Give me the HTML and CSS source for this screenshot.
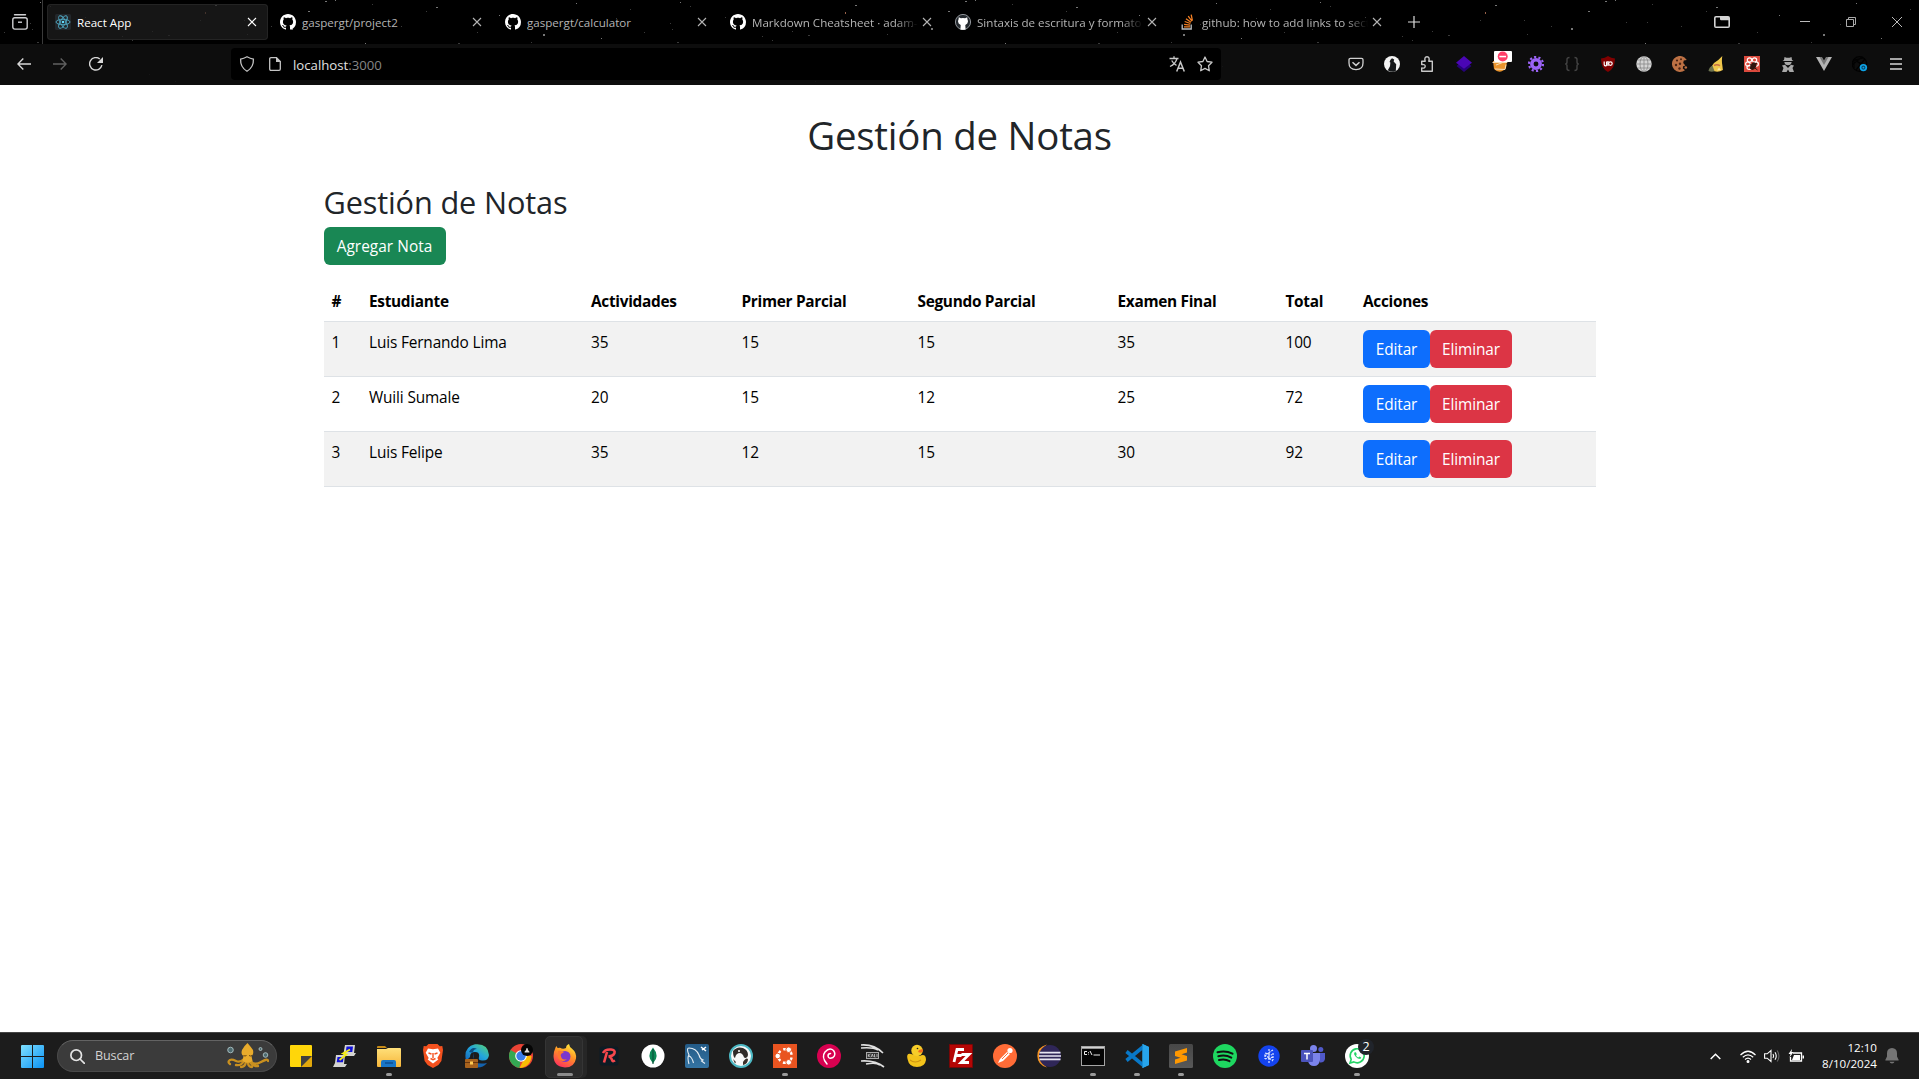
FILE: index.html
```
<!DOCTYPE html>
<html lang="es">
<head>
<meta charset="utf-8">
<title>React App</title>
<link rel="stylesheet" href="styles.css">
</head>
<body>
<svg class="defs" aria-hidden="true">
  <defs>
    <symbol id="x" viewBox="0 0 10 10"><path d="M1 1l8 8M9 1L1 9" fill="none" stroke="currentColor" stroke-width="1.1"/></symbol>
    <symbol id="github" viewBox="0 0 16 16"><path fill="currentColor" d="M8 0C3.58 0 0 3.58 0 8c0 3.54 2.29 6.53 5.47 7.59.4.07.55-.17.55-.38 0-.19-.01-.82-.01-1.49-2.01.37-2.53-.49-2.69-.94-.09-.23-.48-.94-.82-1.13-.28-.15-.68-.52-.01-.53.63-.01 1.08.58 1.23.82.72 1.21 1.87.87 2.33.66.07-.52.28-.87.51-1.07-1.78-.2-3.64-.89-3.64-3.95 0-.87.31-1.59.82-2.15-.08-.2-.36-1.02.08-2.12 0 0 .67-.21 2.2.82.64-.18 1.32-.27 2-.27s1.36.09 2 .27c1.53-1.04 2.2-.82 2.2-.82.44 1.1.16 1.92.08 2.12.51.56.82 1.27.82 2.15 0 3.07-1.87 3.75-3.65 3.95.29.25.54.73.54 1.48 0 1.07-.01 1.93-.01 2.2 0 .21.15.46.55.38A8.01 8.01 0 0016 8c0-4.42-3.58-8-8-8z"/></symbol>
    <linearGradient id="gWin" x1="0" y1="0" x2="1" y2="1"><stop stop-color="#7fe0ff"/><stop offset="1" stop-color="#0a92f5"/></linearGradient>
    <linearGradient id="gEdge" x1="0" y1="1" x2="1" y2="0"><stop stop-color="#1565b8"/><stop offset=".5" stop-color="#22a5dd"/><stop offset="1" stop-color="#5bd66d"/></linearGradient>
    <linearGradient id="gFox" x1=".8" y1="0" x2=".3" y2="1"><stop stop-color="#fff03f"/><stop offset=".45" stop-color="#ff9425"/><stop offset="1" stop-color="#ff2f5e"/></linearGradient>
    <linearGradient id="gFolder" x1="0" y1="0" x2="0" y2="1"><stop stop-color="#ffe07a"/><stop offset="1" stop-color="#f6b63a"/></linearGradient>
    <linearGradient id="gSql" x1="0" y1="0" x2="0" y2="1"><stop stop-color="#235a86"/><stop offset="1" stop-color="#3474a3"/></linearGradient>
    <linearGradient id="gSub" x1="0" y1="0" x2="0" y2="1"><stop stop-color="#474747"/><stop offset="1" stop-color="#585858"/></linearGradient>
  </defs>
</svg>

<header class="browser">
  <svg class="stars" width="1919" height="85" aria-hidden="true">
    <defs>
      <pattern id="sky" width="640" height="85" patternUnits="userSpaceOnUse">
        <g fill="#777">
          <rect x="40" y="2" width="1" height="1"/><rect x="215" y="5" width="2" height="1"/><rect x="308" y="11" width="2" height="1"/><rect x="325" y="1" width="2" height="1"/><rect x="335" y="0" width="1" height="1"/><rect x="436" y="7" width="2" height="1"/><rect x="576" y="3" width="1" height="1"/><rect x="499" y="15" width="1" height="1"/><rect x="543" y="34" width="2" height="2"/><rect x="601" y="38" width="1" height="1"/><rect x="365" y="43" width="1" height="1"/><rect x="291" y="28" width="2" height="2"/>
        </g>
        <g fill="#3a3a3a">
          <rect x="30" y="23" width="1" height="1"/><rect x="32" y="29" width="1" height="1"/><rect x="4" y="32" width="1" height="1"/><rect x="37" y="42" width="2" height="1"/><rect x="50" y="6" width="1" height="1"/><rect x="152" y="31" width="1" height="1"/><rect x="122" y="36" width="1" height="1"/><rect x="168" y="35" width="2" height="1"/><rect x="200" y="20" width="1" height="1"/><rect x="244" y="20" width="1" height="1"/><rect x="247" y="34" width="1" height="1"/><rect x="271" y="26" width="1" height="1"/><rect x="346" y="22" width="1" height="1"/><rect x="367" y="22" width="1" height="1"/><rect x="372" y="4" width="1" height="1"/><rect x="401" y="26" width="1" height="1"/><rect x="426" y="11" width="1" height="1"/><rect x="458" y="43" width="2" height="1"/><rect x="477" y="32" width="1" height="1"/><rect x="531" y="42" width="1" height="1"/><rect x="560" y="24" width="1" height="1"/><rect x="616" y="18" width="1" height="1"/><rect x="630" y="9" width="1" height="1"/><rect x="85" y="17" width="1" height="1"/><rect x="132" y="40" width="1" height="1"/><rect x="175" y="81" width="1" height="1"/><rect x="519" y="82" width="1" height="1"/><rect x="149" y="74" width="1" height="1"/><rect x="582" y="66" width="1" height="1"/>
        </g>
        <rect x="205" y="12" width="1" height="2" fill="#97614a"/>
      </pattern>
    </defs>
    <rect width="1919" height="85" fill="url(#sky)"/>
  </svg>

  <div class="tabbar">
    <div class="view-button">
      <svg width="16" height="16" viewBox="0 0 16 16" fill="none" stroke="#cfcfd2" stroke-width="1.4"><path d="M2.5 .8h11" stroke-linecap="round"/><rect x=".8" y="3.7" width="14.4" height="11.4" rx="2"/><path d="M6 8.2h4"/></svg>
    </div>
    <nav class="tabs">
      <div class="tab active">
        <svg class="fav" viewBox="0 0 16 16"><rect width="16" height="16" rx="1.5" fill="#23272b"/><g fill="none" stroke="#4fa9c4" stroke-width=".9"><ellipse cx="8" cy="8" rx="7" ry="2.7"/><ellipse cx="8" cy="8" rx="7" ry="2.7" transform="rotate(60 8 8)"/><ellipse cx="8" cy="8" rx="7" ry="2.7" transform="rotate(120 8 8)"/></g><circle cx="8" cy="8" r="1.3" fill="#61dafb"/></svg>
        <span class="tab-title">React App</span><svg class="close"><use href="#x"/></svg>
      </div>
      <div class="tab"><svg class="fav"><use href="#github"/></svg><span class="tab-title">gaspergt/project2</span><svg class="close"><use href="#x"/></svg></div>
      <div class="tab"><svg class="fav"><use href="#github"/></svg><span class="tab-title">gaspergt/calculator</span><svg class="close"><use href="#x"/></svg></div>
      <div class="tab"><svg class="fav"><use href="#github"/></svg><span class="tab-title fade">Markdown Cheatsheet · adam-p/markdown-here</span><svg class="close"><use href="#x"/></svg></div>
      <div class="tab"><svg class="fav" viewBox="0 0 16 16"><circle cx="8" cy="8" r="7.6" fill="#24292e" stroke="#aeb4ba" stroke-width=".8"/><path fill="#fff" d="M3.8 3.2l2.1 1q2-.5 4.2 0l2.1-1 .3 2.3q1.6 3.6-2.2 5.4l.3 4.5q-2.7.8-5.2 0l.3-4.5q-3.8-1.600-2.200-5.400z"/></svg><span class="tab-title fade">Sintaxis de escritura y formato básicos</span><svg class="close"><use href="#x"/></svg></div>
      <div class="tab"><svg class="fav" viewBox="0 0 16 16" fill="none" stroke-width="1.3"><path d="M2.700 10.500v4.500h9v-4.500" stroke="#bcc0c4" transform="translate(-.5 0)"/><path d="M4 12.800h6M4.100 10.300l6 .9M4.700 7.500l5.700 2M6 4.700l5 3.500M8.200 2.200l3.700 4.900M11.200.6l1.200 6" stroke="#f48024"/></svg><span class="tab-title fade">github: how to add links to sections</span><svg class="close"><use href="#x"/></svg></div>
    </nav>
    <svg class="plus" width="12" height="12" viewBox="0 0 12 12"><path d="M6 0v12M0 6h12" stroke="#ddd" stroke-width="1.2"/></svg>
    <div class="window-buttons">
      <svg class="list-tabs" width="16" height="12" viewBox="0 0 16 12"><path d="M2 0h12q2 0 2 2v8q0 2-2 2H2q-2 0-2-2V2q0-2 2-2zm-.4 2v8.400h12.800V4.200H7.200q-1.200 0-1.200-1.200V1.600H2z" fill="#d4d4d4" fill-rule="evenodd"/></svg>
      <svg width="10" height="10" viewBox="0 0 10 10"><path d="M0 4.500h10" stroke="#bbb"/></svg>
      <svg width="10" height="10" viewBox="0 0 10 10" fill="none" stroke="#aaa"><path d="M.5 2.500h7v7h-7zM2.500 2.500v-2h7v7h-2"/></svg>
      <svg width="10" height="10" viewBox="0 0 10 10"><path d="M0 0l10 10M10 0L0 10" stroke="#bbb"/></svg>
    </div>
  </div>

  <div class="toolbar">
    <div class="nav-buttons">
      <svg width="14" height="12" viewBox="0 0 14 12" fill="none" stroke="#d8d8d8" stroke-width="1.400"><path d="M14 6H1M6.300.6L.9 6l5.400 5.400"/></svg>
      <svg width="14" height="12" viewBox="0 0 14 12" fill="none" stroke="#606060" stroke-width="1.400"><path d="M0 6h13M7.700.6L13.100 6l-5.400 5.400"/></svg>
      <svg width="14" height="14" viewBox="0 0 14 14"><path d="M12.900 8.200A6.200 6.200 0 1 1 10.800 2" fill="none" stroke="#d8d8d8" stroke-width="1.400"/><path d="M14 0v6H8z" fill="#d8d8d8"/></svg>
    </div>
    <div class="urlbar">
      <svg class="shield" width="16" height="16" viewBox="0 0 16 16"><path d="M8 .8q3.300 1.800 6.400 2.300.4 8.200-6.400 12.100Q1.200 11.300 1.600 3.100 4.700 2.600 8 .8z" fill="none" stroke="#c4c4c4" stroke-width="1.300"/></svg>
      <svg class="page" width="12" height="14" viewBox="0 0 12 14"><path d="M2 .7h5.500l3.800 3.800V12q0 1.300-1.300 1.300H2Q.7 13.300.7 12V2Q.7.700 2 .7z" fill="none" stroke="#c4c4c4" stroke-width="1.300"/><path d="M7 0l5 5H7z" fill="#c4c4c4"/></svg>
      <span class="url">localhost<span class="port">:3000</span></span>
      <svg class="translate" width="16" height="16" viewBox="0 0 16 16" fill="none" stroke="#c8c8c8" stroke-width="1.300"><path d="M.5 2.500h9M5 .3v2.200M8 2.500Q6.500 8 1 10.500M2.700 4.500Q4.500 8 7.500 9.300"/><path d="M7.700 15.500l3.800-9.500 3.800 9.500M9 12.300h5" stroke-width="1.500"/></svg>
      <svg width="16" height="16" viewBox="0 0 16 16"><path d="M8 1l2.100 4.500 4.900.7-3.500 3.500.8 5.100L8 12.400l-4.300 2.400.8-5.100L1 6.200l4.900-.7z" fill="none" stroke="#c8c8c8" stroke-width="1.300" stroke-linejoin="round"/></svg>
    </div>
    <div class="extensions">
      <span><svg viewBox="0 0 16 16" fill="none" stroke="#cfcfcf" stroke-width="1.300"><path d="M2.500 2.300h11q1.500 0 1.500 1.500V7q0 6.500-7 6.700Q1 13.500 1 7V3.800q0-1.500 1.500-1.500z"/><path d="M4.500 6.200L8 9.400l3.500-3.200" stroke-width="1.500"/></svg></span>
      <span><svg viewBox="0 0 16 16"><circle cx="8" cy="8" r="8" fill="#f4f4f4"/><path d="M8 2.200l2.200 1.200-.6 2.200 2.600 2.600-.4 6.800q-4.300 2-8-.7L6 10.200l.4-3.700L5.500 6l1-2.200z" fill="#16181a"/></svg></span>
      <span><svg viewBox="0 0 16 16"><path d="M1.700 8.500V5.300h3.500q-1.300-4.500 1.800-4.500t1.800 4.500h3.500v9.900H1.700V12q3.500.5 3.500-1.700T1.700 8.500z" fill="none" stroke="#c8c8c8" stroke-width="1.400" stroke-linejoin="round"/></svg></span>
      <span><svg viewBox="0 0 16 16"><path d="M8 4l7.500 6L8 16 .5 10z" fill="#26027a"/><path d="M8 0l8 6.800-8 6-8-6z" fill="#4a06b5"/></svg></span>
      <span class="badged"><svg viewBox="0 0 16 16"><path d="M1 5h14l-1 7q-6 7-12 1z" fill="#e9942e"/><path d="M.5 6.500h14.800M4 9l8-3M3 13l10 .5 1-5" stroke="#f7dfb9" fill="none"/></svg><svg class="badge" viewBox="0 0 18 11"><rect width="18" height="11" rx="1" fill="#fff"/><circle cx="8.700" cy="5.500" r="5" fill="#ff3f69"/><rect x="5.400" y="4.800" width="6.600" height="1.500" fill="#fff"/></svg></span>
      <span><svg viewBox="0 0 16 16"><circle cx="8" cy="8" r="4.200" fill="none" stroke="#9b63f5" stroke-width="3.500"/><circle cx="8" cy="8" r="7" fill="none" stroke="#9b63f5" stroke-width="2.200" stroke-dasharray="2.200 2.200"/></svg></span>
      <span><svg viewBox="0 0 16 16" fill="none" stroke="#444" stroke-width="1.400"><path d="M5.500 1.500q-2.500 0-2.500 2V6q0 2-1.800 2Q3 8 3 10v2.500q0 2 2.500 2M10.500 1.500q2.500 0 2.500 2V6q0 2 1.800 2Q13 8 13 10v2.500q0 2-2.500 2"/></svg></span>
      <span><svg viewBox="0 0 16 16"><path d="M8 0q3 2 7 2.500 0 10-7 13.500Q1 12.500 1 2.500 5 2 8 0z" fill="#800000"/><path d="M4.200 5.500v3q0 1.300 1.200 1.300t1.200-1.300v-3M8 10V5" fill="none" stroke="#fff" stroke-width="1.200"/><circle cx="10.400" cy="7.600" r="1.800" fill="none" stroke="#fff" stroke-width="1.200"/></svg></span>
      <span><svg viewBox="0 0 16 16"><circle cx="8" cy="8" r="7.700" fill="#d5d5d5"/><g fill="none" stroke="#888" stroke-width=".8"><path d="M8 0v16M0 8h16M1.500 4h13M1.500 12h13"/><ellipse cx="8" cy="8" rx="4" ry="7.600"/></g></svg></span>
      <span><svg viewBox="0 0 16 16"><path d="M12.500 1.400A8 8 0 1 0 13 14.200l-2.200-1.600.3-2.400 2.300-.7-2.200-2.500.6-2.600 3-.3z" fill="#bd7144"/><g fill="#4a2414"><circle cx="5" cy="4.500" r="1.100"/><circle cx="9" cy="3.200" r="1"/><circle cx="4" cy="9" r="1.200"/><circle cx="8" cy="7.800" r="1.200"/><circle cx="7.500" cy="12.500" r="1.200"/></g><circle cx="13.800" cy="11.500" r="1.300" fill="#bd7144"/></svg></span>
      <span><svg viewBox="0 0 16 16"><path d="M14.300 0q-.8 5 0 9l.6 5q-5 3-11 .5Q3 10 6 7q4-2 8.300-7z" fill="#f0c84c"/><path d="M4.500 9.500Q1 11 .5 15q3 1.400 6 .3z" fill="#6d7350"/><path d="M6 9.500q3-1.800 6 .2" stroke="#c86e43" stroke-width="1.500" fill="none"/><path d="M9 14.500l2-3 2 2.600" fill="#fae9a8"/></svg></span>
      <span><svg viewBox="0 0 16 16"><rect width="16" height="16" fill="#dc4a3d"/><g fill="none" stroke="#fff" stroke-width="1.200"><circle cx="5.500" cy="4" r="2.200"/><circle cx="10.500" cy="4" r="2.200"/><circle cx="3.800" cy="8" r="2.200"/><circle cx="12.200" cy="8" r="2.200"/><circle cx="5" cy="11.500" r="2"/></g><ellipse cx="9.300" cy="10" rx="2.700" ry="4" fill="#30150f" transform="rotate(30 9 10)"/><path d="M5.500 8l8 6M13 7l-7 6" stroke="#30150f"/></svg></span>
      <span><svg viewBox="0 0 16 16" fill="#a8a8a8"><path d="M4.500 1l2 .7h3l2-.7.5 3 1.500 1H2.500L4 4zM4.300 6h7.400q-.7 3.200-3.700 3.200T4.300 6zM2 9.500l3-.8L8 12l3-3.300 3 .8-1.500 2.500 1.500 4H9.500L8 13.500 6.500 16H2l1.500-4z"/></svg></span>
      <span><svg viewBox="0 0 16 16"><path d="M0 1h5.500L8 5.500 10.500 1H16L8 15z" fill="#b5b5b5"/><path d="M3.500 1H6l2 3.500L10 1h2.500L8 9z" fill="#777"/></svg></span>
      <span><svg viewBox="0 0 16 16"><g fill="none" stroke="#020202" stroke-width="1.200"><circle cx="7.500" cy="8" r="7.300"/><path d="M2 3l12 9M0 9l10-8M4 14L13 3M2 12V4l9-2M8 15V6"/></g><circle cx="11.400" cy="11.600" r="3.700" fill="#0da4e8"/><circle cx="11.400" cy="11.600" r="1.500" fill="none" stroke="#0d4665" stroke-width="1.100"/></svg></span>
      <span><svg viewBox="0 0 16 16"><path d="M2 3.500h12M2 8.500h12M2 13.500h12" stroke="#d8d8d8" stroke-width="1.300" transform="translate(0 -.5)"/></svg></span>
    </div>
  </div>
</header>

<main class="container">
  <h1>Gestión de Notas</h1>
  <h2>Gestión de Notas</h2>
  <button class="btn btn-success">Agregar Nota</button>
  <table class="table">
    <colgroup><col class="c-num"><col class="c-student"><col class="c-act"><col class="c-first"><col class="c-second"><col class="c-final"><col class="c-total"><col></colgroup>
    <thead><tr><th>#</th><th>Estudiante</th><th>Actividades</th><th>Primer Parcial</th><th>Segundo Parcial</th><th>Examen Final</th><th>Total</th><th>Acciones</th></tr></thead>
    <tbody>
      <tr><td>1</td><td>Luis Fernando Lima</td><td>35</td><td>15</td><td>15</td><td>35</td><td>100</td><td class="actions"><button class="btn btn-primary">Editar</button><button class="btn btn-danger">Eliminar</button></td></tr>
      <tr><td>2</td><td>Wuili Sumale</td><td>20</td><td>15</td><td>12</td><td>25</td><td>72</td><td class="actions"><button class="btn btn-primary">Editar</button><button class="btn btn-danger">Eliminar</button></td></tr>
      <tr><td>3</td><td>Luis Felipe</td><td>35</td><td>12</td><td>15</td><td>30</td><td>92</td><td class="actions"><button class="btn btn-primary">Editar</button><button class="btn btn-danger">Eliminar</button></td></tr>
    </tbody>
  </table>
</main>

<footer class="taskbar">
  <svg class="start" width="23" height="23" viewBox="0 0 23 23" fill="url(#gWin)"><path d="M0 1q0-1 1-1h10v11H0zM12 0h10q1 0 1 1v10H12zM0 12h11v11H1q-1 0-1-1zM12 12h11v10q0 1-1 1H12z"/></svg>
  <div class="search">
    <svg width="15" height="15" viewBox="0 0 15 15" fill="none" stroke="#e4e4e4" stroke-width="1.700"><circle cx="6.200" cy="6.200" r="5.300"/><path d="M10 10l4.500 4.500" stroke-linecap="round"/></svg>
    <span>Buscar</span>
    <svg class="octopus" width="42" height="26" viewBox="0 0 42 26"><g fill="none" stroke="#c9901f" stroke-width="2.300" stroke-linecap="round"><path d="M17 16q-4 4-8 2t-6-1q-3 2 0 4M17 18q-3 5-8 4M19 19q-1 5-5 5M24 18q3 5 10 1t7-1M23 19q3 5 8 4M21 19q0 5 4 5"/></g><path d="M20.500 0q3.500 4 5.500 7 1 4-1.500 6l1 5q-5 3.500-10 0l1-5q-3-2-1.500-6 2-4 5.500-7z" fill="#e8ab2c"/><path d="M16.500 12.500q1.500 1 3 0M22 12.500q1.500 1 3 0" stroke="#6b4611" fill="none"/><g fill="#4e6b70" stroke="#b9cfd2" stroke-width=".8"><circle cx="3.500" cy="7" r="2.800"/><circle cx="33.500" cy="6" r="1.500"/><circle cx="38.500" cy="12" r="2.300"/></g></svg>
  </div>
  <nav class="apps">
    <span class="app"><svg viewBox="0 0 24 24"><path d="M2 1h20q1 0 1 1v10H12v11H2q-1 0-1-1V2q0-1 1-1z" fill="#ffd60a"/><path d="M12 12h11v10q0 1-1 1H12z" fill="#e2a80c"/><path d="M12 12h11L12 23z" fill="#41413d"/></svg></span>
    <span class="app"><svg viewBox="0 0 24 24"><path d="M12 1h10l-1 8h2l-2 3h-11zM3 11h9l-1 9h3l-2 3H0l2-4z" fill="#d4d4d0"/><path d="M13.500 2.500h6.500l-.7 5.500h-6.500zM4.500 13h6.200l-.8 5.300H3.700z" fill="#1111d8"/><path d="M17 5.500l-7 4 3.500 1-7 5.500" fill="none" stroke="#f5ee11" stroke-width="1.800"/></svg></span>
    <span class="app running"><svg viewBox="0 0 24 24"><path d="M0 3q0-1 1-1h7l2 2H0z" fill="#c68a16"/><path d="M0 5h9l2-1h12q1 0 1 1v17q0 1-1 1H1q-1 0-1-1z" fill="url(#gFolder)"/><path d="M4 23v-5q0-2 2-2h11q2 0 2 2v5z" fill="#1976c8"/><path d="M8 19h8" stroke="#0e4f92" stroke-width="1.500"/></svg></span>
    <span class="app"><svg viewBox="0 0 24 24"><path d="M7.500 0h9l2.300 2.200 2.500-.2.700 4-1.600 11-3 4L12 24l-5.400-3-3-4L2 6l.7-4 2.500.2z" fill="#f4511e"/><path d="M7 4.500l5 .8 5-.8 2.300 4.200-3 5.300 1 1.500-5.300 4-5.300-4 1-1.500-3-5.300z" fill="#fff"/><path d="M7.500 9l3 1M16.500 9l-3 1M12 9v5M9.500 14.500l2.500 1.200 2.500-1.200" stroke="#f4511e" stroke-width="1.400" fill="none"/></svg></span>
    <span class="app"><svg viewBox="0 0 24 24"><path d="M1 17Q-2 3 10 .3 23-1 24 11q-.5 6-7 5.500-4 0-3-3.500 1-5-4-5-5 0-5 5z" fill="url(#gEdge)"/><path d="M9 9q-3 13 13 10-5 6-13 4z" fill="#1462ad"/><path d="M4 8q3-6 8-3-4 0-4 4z" fill="#0b4e80"/><rect y="15" width="13" height="9" rx="1" fill="#a7621d"/><path d="M0 18.500h13" stroke="#69370f"/><rect x="5" y="17.500" width="3" height="3" fill="#ffcb52"/></svg></span>
    <span class="app"><svg viewBox="0 0 24 24"><circle cx="12" cy="12" r="12" fill="#ea4335"/><path d="M12 12L1.600 6A12 12 0 0 0 10.500 23.900z" fill="#34a853"/><path d="M12 12h10.500A12 12 0 0 1 10.500 23.900L15 15z" fill="#fbbc04"/><circle cx="12" cy="12" r="5.800" fill="#fff"/><circle cx="12" cy="12" r="4.700" fill="#3b7de9"/><circle cx="18" cy="6" r="6" fill="#050505"/><path d="M15.500 8.500q0-2 1.500-2.300 0-2.200 1-2.200t1 2.200q1.500.3 1.500 2.300z" fill="#ddd"/></svg></span>
    <span class="app focused running"><svg viewBox="0 0 24 24"><path d="M2 5q.5-2 1.500-3 .5 1.800 1.500 2 3-.5 3.500.5Q11 5 13 4q0-3 3-4 .5 3 2.800 4.500 5 4 4.200 10Q21.500 23.500 12 23.500.7 22.500.5 12 .5 8 2 5z" fill="url(#gFox)"/><circle cx="12" cy="12.500" r="5.500" fill="#7b36cd"/><path d="M5 7q3-1 6 1.800-3 .2-3.300 2.500Q8.500 17 14 15q-5 5-9-1z" fill="#ff782e"/></svg></span>
    <span class="app"><svg viewBox="0 0 24 24"><rect x="2.500" y="2.500" width="19" height="19" rx="3" fill="#0d1b24"/><path d="M10 8L7 18.500M6 9q2-4 8-3.500 4.500.5 3.500 3.500-1 3-6 3.500 2.500 0 3.500 3.500.5 2 3 .5" fill="none" stroke="#f5484d" stroke-width="2.600"/></svg></span>
    <span class="app"><svg viewBox="0 0 24 24"><circle cx="12" cy="12" r="11.500" fill="#fff"/><path d="M12 3.500q7 8.500.3 15.500l-.3 1-.3-1Q5 12 12 3.500z" fill="#0c8a56"/><path d="M12 5v15" stroke="#064b34"/></svg></span>
    <span class="app"><svg viewBox="0 0 24 24"><rect width="24" height="24" rx="2" fill="url(#gSql)"/><path d="M4 20q-2-7 0-9Q1 4 4 4q7 0 10 7 1 4 4 5l-1.500 1 3.500 2.500M4 12q3 1 4.500 7" fill="none" stroke="#e5edf3" stroke-width="1.100"/><path d="M16 3l5 4M17 6l4-3" stroke="#fff" stroke-width="1.500"/></svg></span>
    <span class="app"><svg viewBox="0 0 24 24"><circle cx="12" cy="12" r="11" fill="#f8f8f8" stroke="#4cb8c4" stroke-width="2"/><path d="M4 7q4-5 10-3 5 2 5 7-.5 4-4 2.500-1-4-4-4.500-4 0-5 5-2-1-2-7z" fill="#302a28"/><path d="M14 18q3-5 5-3 0 5-5 6zM4 15l3 3-1 1.500z" fill="#3a302a"/><circle cx="10" cy="7" r="1" fill="#fff"/></svg></span>
    <span class="app running"><svg viewBox="0 0 24 24"><rect width="24" height="24" fill="#e95420"/><circle cx="12" cy="12" r="6.800" fill="none" stroke="#fff" stroke-width="2.400" stroke-dasharray="11.200 3.040" stroke-dashoffset="-1.500"/><g fill="#fff" stroke="#e95420"><circle cx="4.700" cy="12" r="2.800"/><circle cx="15.700" cy="5.700" r="2.800"/><circle cx="15.700" cy="18.300" r="2.800"/></g></svg></span>
    <span class="app"><svg viewBox="0 0 24 24"><circle cx="12" cy="12" r="12" fill="#d80150"/><path d="M10 20Q4 13 8 8q4.500-5 8.500-1.500 3 4-.5 7-4.500 2-5-1.500 0-2.500 2.500-2.500" fill="none" stroke="#fff" stroke-width="1.500" stroke-linecap="round"/></svg></span>
    <span class="app"><svg viewBox="0 0 24 24"><path d="M0 1q13-1 22 8M0 4q12-1 17 2M0 17q14-1 23 6M5 20q10-2 14 1" fill="none" stroke="#e0e0e0" stroke-width="1.600"/><rect x="5.500" y="8.500" width="12" height="6" fill="#333" stroke="#aaa"/><path d="M7.300 10v3M9.500 10l-2 1.500 2 1.500M10.300 13l1-3 1 3M13.500 10v3h1M16 10v3" fill="none" stroke="#ddd" stroke-width=".7"/></svg></span>
    <span class="app"><svg viewBox="0 0 24 24"><path d="M6 10Q1 9 2.500 15 4 23 12 23t9-7q0-7-6.500-4-5-1-8.500-2z" fill="#f3c31b"/><circle cx="12" cy="6.500" r="5.700" fill="#f7cd29"/><path d="M14 6q5-2 4 1t-5 1z" fill="#f06c1c"/><path d="M5 16q5 4 11 0" stroke="#cf9411" stroke-width="1.200" fill="none"/><circle cx="12.500" cy="4.500" r=".8" fill="#222"/></svg></span>
    <span class="app"><svg viewBox="0 0 24 24"><rect x=".5" y=".5" width="23" height="23" fill="#b50605" stroke="#7f0202" stroke-dasharray="2 1"/><path d="M5 18L8 5.500h7M7 11.500h5.500M12.500 10.500H20L12 18.500h8" fill="none" stroke="#fff" stroke-width="2.800"/></svg></span>
    <span class="app"><svg viewBox="0 0 24 24"><circle cx="12" cy="12" r="12" fill="#ff6c37"/><path d="M5 19l2-4 7-7 3 2-7 7z" fill="#fff"/><circle cx="17" cy="6.500" r="2.600" fill="#fff"/><path d="M9 15l6-6" stroke="#ff6c37"/></svg></span>
    <span class="app"><svg viewBox="0 0 24 24"><path d="M10 .5Q0 3 .3 12T10 23.500Q3.500 18 3.500 12T10 .500z" fill="#f79421"/><circle cx="13" cy="12" r="11" fill="#2f2658"/><path d="M2.500 8.700h21M2 12h22M2.500 15.300h21" stroke="#e7e5f2" stroke-width="1.700"/></svg></span>
    <span class="app running"><svg viewBox="0 0 24 24"><rect x=".5" y="2.500" width="23" height="19" fill="#050505" stroke="#a5a5a5"/><path d="M1 3.800h22" stroke="#d1d1d1" stroke-width="1.800"/><path d="M6 7.500H3.500v3H6M7.500 8v.8M7.500 9.700v.8M9 7l2 4M12.500 11H19" stroke="#eee" fill="none"/></svg></span>
    <span class="app running"><svg viewBox="0 0 24 24"><path d="M17.500 0L24 3v18l-6.500 3z" fill="#25a7f0"/><path d="M1.500 7.500L18 21M1.500 16.500L18 3" stroke="#0878c8" stroke-width="3.600"/><path d="M17.500 0v24L24 21V3z" fill="#27a5ec"/></svg></span>
    <span class="app running"><svg viewBox="0 0 24 24"><rect width="24" height="24" rx="1.500" fill="url(#gSub)"/><path d="M6 7.500L18 4v4.500l-5.500 1.700L18 12v4.500L6 20v-4.500l5.500-1.700L6 12z" fill="#ff9800"/></svg></span>
    <span class="app"><svg viewBox="0 0 24 24"><circle cx="12" cy="12" r="12" fill="#1ed760"/><path d="M4.500 8.300q8-2.300 15 1.400M5.300 12.300q7-1.900 13 1.300M6 16q6-1.500 10.500 1.200" fill="none" stroke="#111" stroke-width="2" stroke-linecap="round"/></svg></span>
    <span class="app"><svg viewBox="0 0 24 24"><circle cx="12" cy="12" r="10.700" fill="#1443ee"/><g fill="none" stroke="#dce3ff" stroke-width="1.200" stroke-dasharray="2 1"><path d="M12 5v14M16 6l-8 5 8 6M8 9l7 2M8 15l8-2M16 9v7M8 11v4"/></g></svg></span>
    <span class="app"><svg viewBox="0 0 24 24"><circle cx="12.500" cy="4.500" r="3.500" fill="#7b83eb"/><circle cx="19.800" cy="5.500" r="2.500" fill="#5059c9"/><path d="M16 9h8v6q-1 4-5 3.500z" fill="#5059c9"/><path d="M7 9h12v7q-1 6-6 6t-6-5z" fill="#7b83eb"/><rect y="6" width="12" height="12" rx="1" fill="#4b53bc"/><path d="M3 9.500h6M6 9.500v6" stroke="#fff" stroke-width="1.500"/></svg></span>
    <span class="app running whatsapp"><svg viewBox="0 0 24 24"><circle cx="12" cy="12" r="12" fill="#fff"/><path d="M5 19l1.200-3.600a7 7 0 1 1 2.600 2.500z" fill="none" stroke="#25d366" stroke-width="1.600"/><path d="M9.300 8.500q-1 1.500 1.200 4t4.800 2.500l1-1.600-2-1-1 1q-1.500-.4-2.300-2.200l.8-.9-.9-2z" fill="#25d366"/></svg><b class="count">2</b></span>
  </nav>
  <div class="tray">
    <svg class="chevron" width="11" height="7" viewBox="0 0 11 7"><path d="M.7 6l4.800-4.800L10.300 6" fill="none" stroke="#fff" stroke-width="1.500"/></svg>
    <svg class="wifi" width="16" height="13" viewBox="0 0 16 13" fill="none" stroke="#fff" stroke-width="1.200"><path d="M.5 5Q8-2.500 15.500 5M2.800 7.300q5.200-5 10.400 0M5 9.500q3-2.800 6 0"/><circle cx="8" cy="11.400" r=".9" fill="#fff"/></svg>
    <svg class="sound" width="16" height="14" viewBox="0 0 16 14" fill="none" stroke="#fff" stroke-width="1.100"><path d="M.6 4.800h2.600L7 1.500v11L3.200 9.200H.6zM9 5q1.300 2 0 4M11 3.200q2.500 3.800 0 7.600"/><path d="M13.200 1.500q3.500 5.500 0 11" stroke="#666"/></svg>
    <svg class="battery" width="17" height="14" viewBox="0 0 17 14"><path d="M5 4h8.500v8h-11V8" fill="none" stroke="#fff" stroke-width="1.300"/><path d="M6 6h6v5H4z" fill="#fff"/><path d="M14.500 6.500v3H16v-3z" fill="#fff"/><path d="M4 0L.5 5h2L1.500 8.500 5.500 3H3.500z" fill="#fff"/></svg>
    <div class="clock"><span>12:10</span><span>8/10/2024</span></div>
    <svg width="14" height="16" viewBox="0 0 14 16" fill="#747474"><path d="M7 0q5 .2 5 5.200v3.300l1.600 3.300v.7H.4v-.7L2 8.500V5.200Q2 .2 7 0zM4.500 13.700h5Q9 15.500 7 15.500t-2.500-1.800z"/></svg>
  </div>
</footer>
</body>
</html>
```
FILE: styles.css
```
* { box-sizing: border-box; }

body {
  margin: 0;
  height: 1079px;
  display: flex;
  flex-direction: column;
  overflow: hidden;
  background: #fff;
  color: #000;
  font-family: "Open Sans", "Noto Sans", sans-serif;
  font-size: 15.4px;
  line-height: 24px;
  letter-spacing: -0.15px;
}

svg { display: block; flex: none; }
.defs { position: absolute; width: 0; height: 0; }

/* Browser chrome */
.browser {
  position: relative;
  height: 85px;
  flex: none;
  background: #000;
  letter-spacing: 0;
}
.stars { position: absolute; left: 0; top: 0; }

.tabbar {
  position: relative;
  display: flex;
  align-items: center;
  height: 44px;
}
.view-button {
  width: 43px;
  height: 44px;
  padding: 14px 0 0 12px;
  border-right: 1px solid #3a3a3a;
}
.tabs {
  display: flex;
  gap: 4px;
  padding-left: 4px;
}
.tab {
  display: flex;
  align-items: center;
  width: 221px;
  height: 36px;
  padding: 0 11px 0 8px;
  border-radius: 4px;
  color: #b4b4b4;
  font-size: 11.6px;
}
.tab.active {
  background: rgba(32, 32, 32, 0.7);
  box-shadow: inset 0 0 0 1px #242424;
  color: #fff;
}
.fav { width: 16px; height: 16px; color: #fff; }
.tab-title {
  flex: 1;
  margin: 0 6px;
  padding-top: 1px;
  overflow: hidden;
  white-space: nowrap;
}
.fade {
  margin-right: 4px;
  -webkit-mask-image: linear-gradient(to right, #000 calc(100% - 22px), transparent);
  mask-image: linear-gradient(to right, #000 calc(100% - 22px), transparent);
}
.close { width: 10px; height: 10px; }
.plus { margin-left: 15px; }
.window-buttons {
  display: flex;
  align-items: center;
  gap: 36px;
  margin-left: auto;
  padding-right: 17px;
}
.list-tabs { margin-right: 34px; }

.toolbar {
  position: relative;
  display: flex;
  align-items: center;
  height: 41px;
  padding-bottom: 1px;
  background: rgba(15, 15, 15, 0.86);
}
.toolbar::before {
  content: "";
  position: absolute;
  inset: 0;
  z-index: -1;
  background: #0e0e0e;
}
.nav-buttons {
  display: flex;
  align-items: center;
  gap: 22px;
  width: 231px;
  padding-left: 17px;
}
.urlbar {
  display: flex;
  align-items: center;
  width: 990px;
  height: 32px;
  padding: 0 8px;
  border-radius: 4px;
  background: #000;
  color: #e0e0e0;
}
.page { margin: 0 12px 0 14px; }
.url { flex: 1; font-size: 13.2px; padding-top: 2px; }
.port { color: #858585; }
.translate { margin-right: 12px; }
.extensions {
  display: flex;
  margin-left: auto;
  padding-right: 5px;
}
.extensions span {
  position: relative;
  display: grid;
  place-items: center;
  width: 36px;
  height: 32px;
}
.extensions svg { width: 16px; height: 16px; }
.extensions .badge {
  position: absolute;
  left: 12px;
  top: 3px;
  width: 18px;
  height: 11px;
}

/* Grades page */
.container {
  flex: 1;
  width: 1272px;
  margin: 0 auto;
  padding-top: 24px;
}
h1, h2 { margin: 0; color: #212529; font-weight: 400; }
h1 {
  height: 48px;
  padding-top: 2px;
  margin-bottom: 24px;
  font-size: 38.4px;
  line-height: 48px;
  text-align: center;
  letter-spacing: -0.22px;
}
h2 {
  height: 38px;
  padding-top: 2px;
  margin-bottom: 8px;
  font-size: 30.7px;
  line-height: 38px;
  letter-spacing: -0.15px;
}
.btn {
  display: block;
  height: 38px;
  padding: 2px 0 0;
  border: 0;
  border-radius: 6px;
  color: #fff;
  font: inherit;
  letter-spacing: -0.1px;
}
.btn-success { width: 122px; background: #198754; letter-spacing: 0.05px; }
.btn-primary { width: 67px; background: #0d6efd; }
.btn-danger { width: 82px; background: #dc3545; }

.table {
  width: 100%;
  margin-top: 16px;
  border-collapse: separate;
  border-spacing: 0;
  table-layout: fixed;
}
th, td {
  padding: 9px 8px 7px;
  border-bottom: 1px solid #dee2e6;
  text-align: left;
  vertical-align: top;
}
th { font-weight: 700; letter-spacing: -0.3px; }
tbody tr:nth-child(odd) { background: #f2f2f2; }
.table .actions { display: flex; padding: 8px; }
.c-num { width: 37.5px; }
.c-student { width: 222px; }
.c-act { width: 150.5px; }
.c-first { width: 176px; }
.c-second { width: 200px; }
.c-final { width: 168px; }
.c-total { width: 77.5px; }

/* Windows taskbar */
.taskbar {
  display: flex;
  align-items: center;
  flex: none;
  height: 47px;
  padding: 0 20px 0 21px;
  border-top: 1px solid #454545;
  background: #1c1c1c;
  color: #fff;
}
.search {
  display: flex;
  align-items: center;
  width: 220px;
  height: 32px;
  margin-left: 13px;
  padding: 0 7px 0 12px;
  border: 1px solid #4a4a4a;
  border-top-color: #636363;
  border-radius: 16px;
  background: #3b3b3b;
  color: #d2d2d2;
  font-size: 12.6px;
}
.search span { margin-left: 10px; }
.octopus { margin-left: auto; }
.apps { display: flex; margin-left: 2px; }
.app {
  position: relative;
  display: grid;
  place-items: center;
  width: 44px;
  height: 40px;
}
.app svg { position: relative; width: 24px; height: 24px; }
.running::after {
  content: "";
  position: absolute;
  left: 19px;
  bottom: 0;
  width: 6px;
  height: 3px;
  border-radius: 2px;
  background: #9a9a9a;
}
.focused::after { left: 14px; width: 16px; background: #8c8c8c; }
.focused::before {
  content: "";
  position: absolute;
  left: 2px;
  top: 0;
  width: 36px;
  height: 40px;
  border: 1px solid #353535;
  border-radius: 5px;
  background: #2b2b2b;
  box-shadow: 4px 0 0 #262626;
}
.count {
  position: absolute;
  left: 23px;
  top: 3px;
  width: 16px;
  height: 16px;
  border-radius: 8px;
  background: #20242b;
  font-size: 12.5px;
  font-weight: 400;
  line-height: 16px;
  text-align: center;
}
.tray {
  display: flex;
  align-items: center;
  margin-left: auto;
}
.wifi { margin-left: 19px; }
.sound { margin-left: 8px; }
.battery { margin-left: 8px; }
.clock {
  display: flex;
  flex-direction: column;
  width: 72px;
  text-align: right;
  font-size: 11.600px;
  line-height: 16px;
  letter-spacing: 0;
}
.clock + svg { margin-left: 8px; }
```
